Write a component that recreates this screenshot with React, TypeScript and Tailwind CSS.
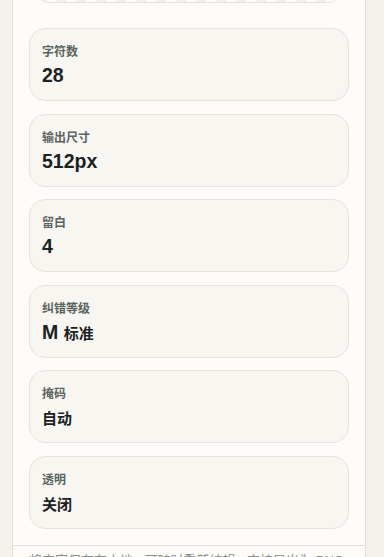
import React from "react";

const items: { label: string; value: React.ReactNode }[] = [
  { label: "字符数", value: "28" },
  { label: "输出尺寸", value: "512px" },
  { label: "留白", value: "4" },
  {
    label: "纠错等级",
    value: (
      <>
        M <span className="text-[15px]">标准</span>
      </>
    ),
  },
  { label: "掩码", value: <span className="text-[15px]">自动</span> },
  { label: "透明", value: <span className="text-[15px]">关闭</span> },
];

export default function App() {
  return (
    <div
      className="w-[384px] h-[557px] overflow-hidden bg-[#f2f1ec] pl-[12px] pr-[18px]"
      style={{ fontFamily: '"Liberation Sans", "Noto Sans CJK SC", sans-serif' }}
    >
      <div className="h-full bg-[#fdfcf8] border-x border-[#e2e0d8] flex flex-col">
        <div className="px-4 -mt-[37px]">
          <div className="mx-[6px] h-[40px] rounded-b-[14px] border border-[#e4e2da] bg-[repeating-linear-gradient(90deg,#f2f1ec_0_10px,#fdfcf8_10px_20px)]" />
        </div>
        <div className="px-4 pt-[25px] flex flex-col gap-[12.5px]">
          {items.map((it) => (
            <div
              key={it.label}
              className="h-[73px] shrink-0 rounded-[16px] border border-[#e5e3da] bg-[#f7f6f1] px-[12px] pt-[15px] flex flex-col gap-[3px]"
            >
              <div className="text-[12px] leading-[16px] font-semibold text-[#5b645e]">
                {it.label}
              </div>
              <div className="text-[19.5px] leading-[24px] font-bold text-[#1b221f]">
                {it.value}
              </div>
            </div>
          ))}
        </div>
        <div className="mt-[16px] border-t border-[#e2e0d8] px-4 pt-[6px]">
          <div className="text-[13px] leading-[18px] text-[#8a8f8a] whitespace-nowrap">
            将内容保存在本地 · 可随时重新编辑 · 支持导出为 PNG
          </div>
        </div>
      </div>
    </div>
  );
}
